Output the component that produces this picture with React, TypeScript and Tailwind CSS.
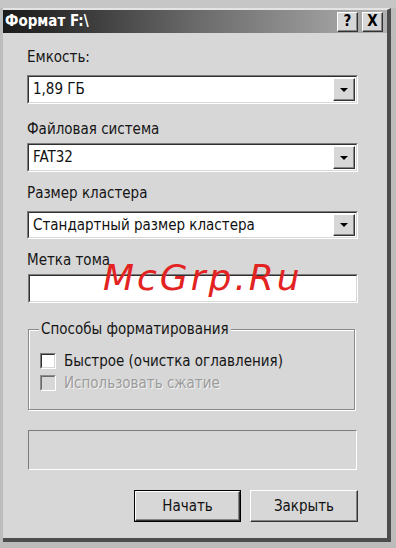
import React from 'react';

const Sunken: React.FC<{ className?: string; children?: React.ReactNode }> = ({ className = '', children }) => (
  <div className={`border border-t-[#7c7c7c] border-l-[#7c7c7c] border-b-white border-r-white ${className}`}>
    <div className="h-full border border-t-[#303030] border-l-[#303030] border-b-[#d8d8d8] border-r-[#d8d8d8] bg-white flex items-center">
      {children}
    </div>
  </div>
);

const Combo: React.FC<{ value: string; className?: string }> = ({ value, className = '' }) => (
  <Sunken className={`w-[331px] ${className}`}>
    <span className="flex-1 pl-[4px] text-[15px] leading-none text-[#111]">{value}</span>
    <div className="mr-[1px] h-[calc(100%-2px)] w-[22px] flex items-center justify-center bg-[#d7d7d7] border border-t-white border-l-white border-b-[#333] border-r-[#333] shadow-[inset_-1px_-1px_0_#858585]">
      <div className="w-0 h-0 border-l-[4px] border-r-[4px] border-t-[4px] border-l-transparent border-r-transparent border-t-black" />
    </div>
  </Sunken>
);

const Label: React.FC<{ text: string; className?: string }> = ({ text, className = '' }) => (
  <div className={`h-[16px] leading-[16px] text-[15px] text-[#151515] ${className}`}>{text}</div>
);

export default function App() {
  return (
    <div className="w-[396px] h-[548px] overflow-hidden bg-[#bcbcbc] relative font-['DejaVu_Sans_Condensed','DejaVu_Sans',sans-serif]">
      <div className="h-[8px] bg-[#c6c6c6]" />
      <div className="ml-[3px] w-[388px] border-t-[2px] border-t-[#e4e4e4] border-r-[4px] border-r-[#4c4c4c] border-b-[4px] border-b-[#4c4c4c] bg-[#d7d7d7]">
        {/* Title bar */}
        <div className="h-[23px] flex items-center bg-gradient-to-r from-[#1a1a1a] via-[#6a6a6a] to-[#b2b2b2] pr-[4px]">
          <span className="pl-[2px] flex-1 text-white font-bold text-[15px] leading-none">Формат F:\</span>
          <div className="w-[21px] h-[20px] flex items-center justify-center bg-[#d7d7d7] border border-t-white border-l-white border-b-[#333] border-r-[#333] shadow-[inset_-1px_-1px_0_#858585] font-bold text-[15px] leading-none text-black">?</div>
          <div className="ml-[4px] w-[21px] h-[20px] flex items-center justify-center bg-[#d7d7d7] border border-t-white border-l-white border-b-[#333] border-r-[#333] shadow-[inset_-1px_-1px_0_#858585] font-bold text-[15px] leading-none text-black">X</div>
        </div>

        {/* Body */}
        <div className="pl-[24px] pt-[16px] pb-[16px] flex flex-col">
          <Label text="Емкость:" />
          <Combo value="1,89 ГБ" className="mt-[10px] h-[29px]" />

          <Label text="Файловая система" className="mt-[17px]" />
          <Combo value="FAT32" className="mt-[6px] h-[29px]" />

          <Label text="Размер кластера" className="mt-[13px]" />
          <Combo value="Стандартный размер кластера" className="mt-[10px] h-[28px]" />

          <Label text="Метка тома" className="mt-[13px]" />
          <Sunken className="mt-[6px] w-[330px] h-[29px] ml-[1px]" />

          {/* Group box */}
          <div className="relative mt-[26px] ml-[1px] w-[327px] h-[81px] border border-[#8a8a8a] shadow-[inset_1px_1px_0_#fff,1px_1px_0_#fff]">
            <span className="absolute -top-[9px] left-[10px] px-[2px] bg-[#d7d7d7] text-[15px] leading-[16px] text-[#151515]">Способы форматирования</span>
            <div className="flex items-center gap-[8px] pl-[11px] pt-[23px]">
              <div className="w-[16px] h-[16px] border border-t-[#7c7c7c] border-l-[#7c7c7c] border-b-white border-r-white">
                <div className="h-full border border-t-[#303030] border-l-[#303030] border-b-[#d8d8d8] border-r-[#d8d8d8] bg-white" />
              </div>
              <span className="text-[15px] leading-[16px] text-[#151515]">Быстрое (очистка оглавления)</span>
            </div>
            <div className="flex items-center gap-[8px] pl-[11px] pt-[6px]">
              <div className="w-[16px] h-[16px] border border-t-[#8c8c8c] border-l-[#8c8c8c] border-b-white border-r-white">
                <div className="h-full border border-t-[#6a6a6a] border-l-[#6a6a6a] border-b-[#d8d8d8] border-r-[#d8d8d8] bg-[#d7d7d7]" />
              </div>
              <span className="text-[15px] leading-[16px] text-[#9c9c9c] [text-shadow:1px_1px_0_#f2f2f2]">Использовать сжатие</span>
            </div>
          </div>

          {/* Progress */}
          <div className="mt-[20px] ml-[1px] w-[329px] h-[40px] border border-t-[#7c7c7c] border-l-[#7c7c7c] border-b-white border-r-white" />

          {/* Buttons */}
          <div className="mt-[20px] w-[331px] flex justify-end gap-[9px]">
            <div className="w-[107px] h-[32px] border border-black">
              <div className="h-full flex items-center justify-center bg-[#d7d7d7] border border-t-white border-l-white border-b-[#333] border-r-[#333] shadow-[inset_-1px_-1px_0_#858585] text-[15px] text-[#111]">Начать</div>
            </div>
            <div className="w-[108px] h-[32px] flex items-center justify-center bg-[#d7d7d7] border border-t-white border-l-white border-b-[#333] border-r-[#333] shadow-[inset_-1px_-1px_0_#858585] text-[15px] text-[#111]">Закрыть</div>
          </div>
        </div>
      </div>

      {/* watermark */}
      <span className="absolute left-[103px] top-[260px] font-['DejaVu_Sans',sans-serif] italic text-[36px] leading-[36px] tracking-[3px] text-[#e32222]">McGrp.Ru</span>
    </div>
  );
}
